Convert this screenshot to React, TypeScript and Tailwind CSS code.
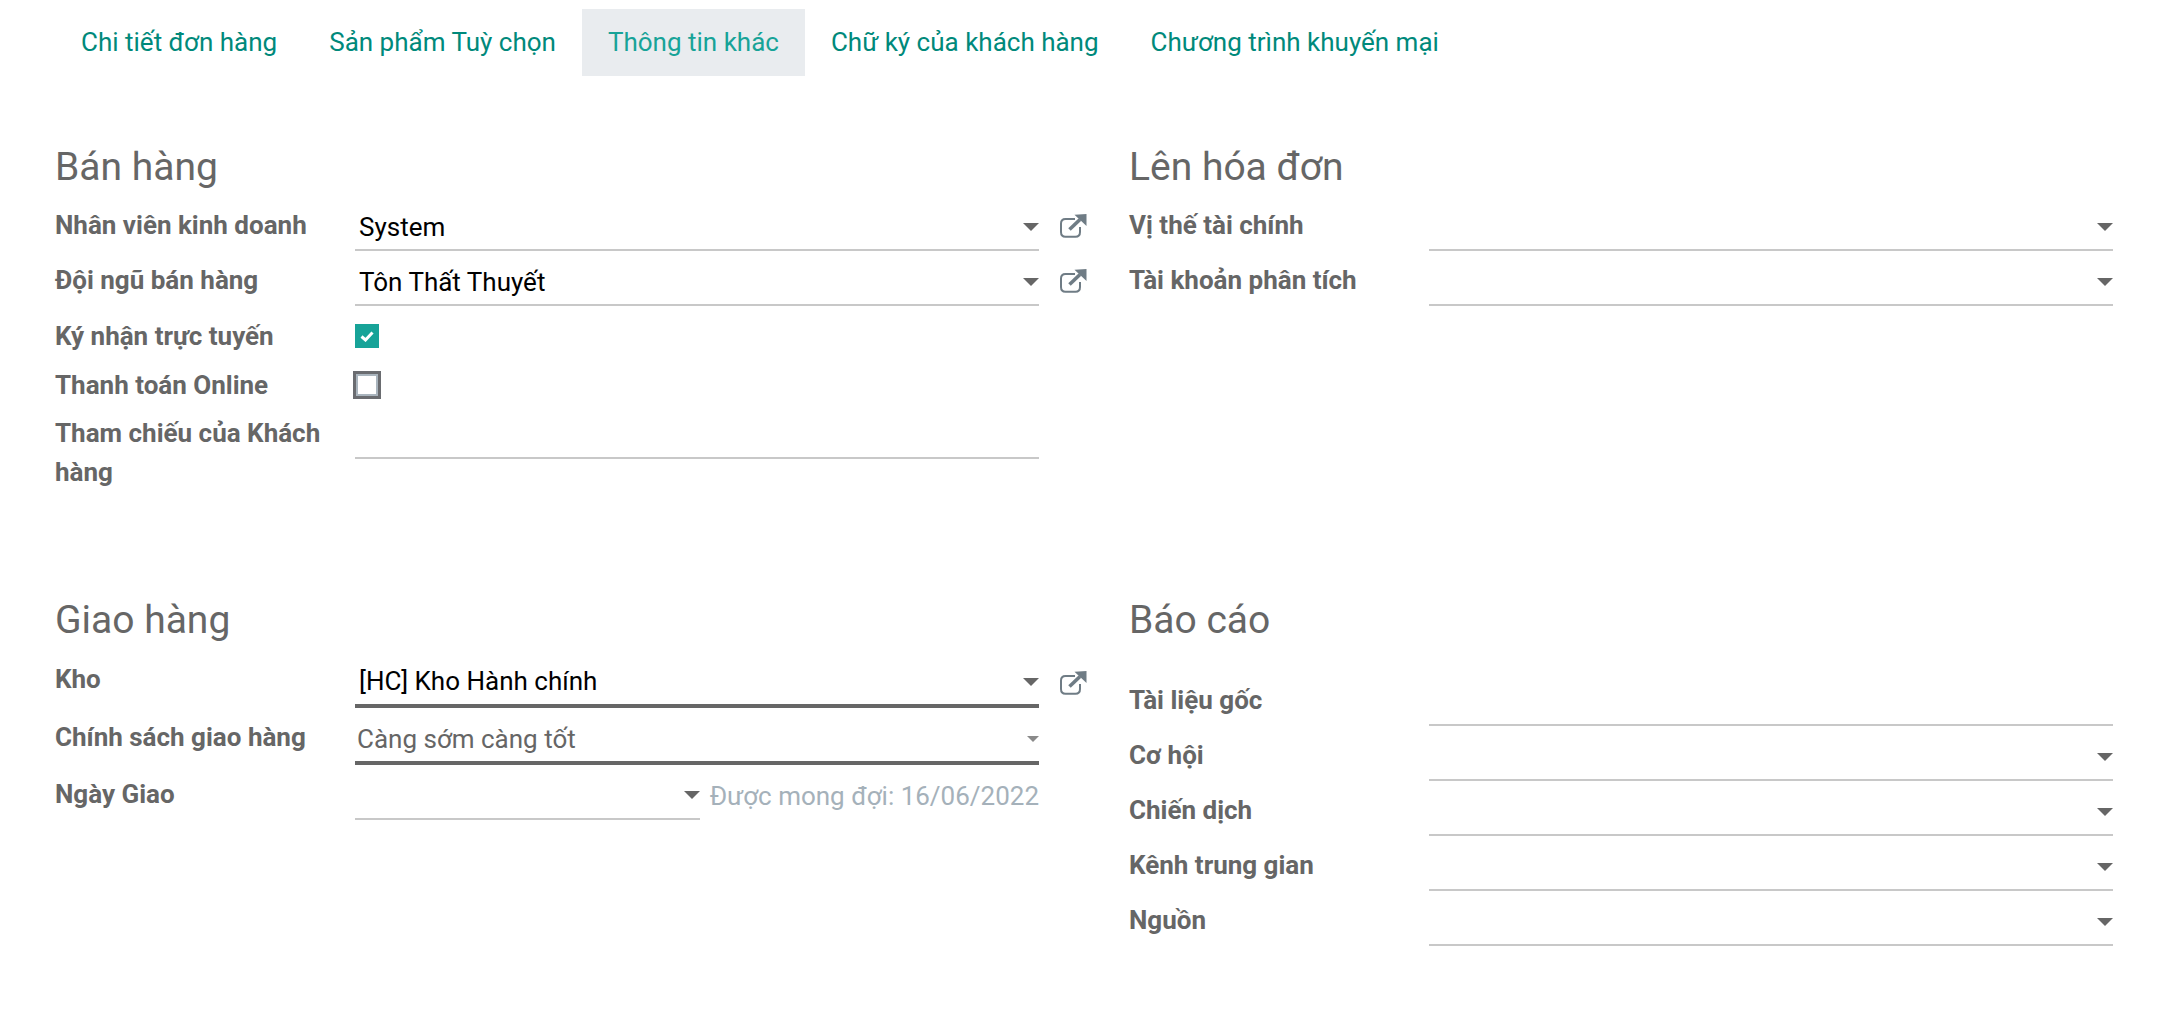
const FONT = "font-['Roboto',sans-serif]";

function Caret({ small }: { small?: boolean }) {
  return small ? (
    <span className="w-0 h-0 border-x-[6px] border-x-transparent border-t-[6px] border-t-[#8a8a8a]" />
  ) : (
    <span className="w-0 h-0 border-x-[8px] border-x-transparent border-t-[8px] border-t-[#666666]" />
  );
}

function LinkIcon() {
  return (
    <svg width="27" height="24" viewBox="0 0 27 24" fill="none" className="ml-[21px] shrink-0">
      <path d="M20 13V18C20 21 18.5 22.8 15.5 22.8H5.5C2.5 22.8 1 21 1 18V9.5C1 6.5 2.5 5 5.5 5H15" stroke="#6f7c85" strokeWidth="2" />
      <path d="M9.5 15.5L20 5.5" stroke="#6f7c85" strokeWidth="3.6" />
      <path d="M14.5 0.8L26.5 0V12L14.5 0.8Z" fill="#6f7c85" />
    </svg>
  );
}

function Field({ value, caret, link, thick, h = 55, muted, iconTop = 18, contentTop = 8 }: { value?: string; caret?: boolean; link?: boolean; thick?: boolean; h?: number; muted?: boolean; iconTop?: number; contentTop?: number }) {
  return (
    <div className="flex items-start">
      <div
        className={`w-[684px] flex items-center justify-between ${thick ? "border-b-4 border-[#666666]" : "border-b-2 border-[#c8c8c8]"}`}
        style={{ height: h, paddingTop: contentTop }}
      >
        <span className={muted ? "pl-[2px] text-[#666666]" : thick ? "pl-[4px] text-black" : "pl-[4px] pt-[2px] text-black"}>{value}</span>
        {caret && <Caret small={muted} />}
      </div>
      {link && <div style={{ paddingTop: iconTop }}><LinkIcon /></div>}
    </div>
  );
}

function Label({ children, className = "" }: { children: React.ReactNode; className?: string }) {
  return <div className={`w-[300px] shrink-0 font-bold text-[#666666] leading-[39px] ${className}`}>{children}</div>;
}

function Heading({ children }: { children: React.ReactNode }) {
  return <h2 className="text-[39px] leading-[46px] text-[#666666] font-normal">{children}</h2>;
}

function TextRow({ label, ...rest }: { label: string } & React.ComponentProps<typeof Field>) {
  return (
    <div className="flex">
      <Label className="pt-[10px]">{label}</Label>
      <Field {...rest} />
    </div>
  );
}

export default function App() {
  const tabs = ["Chi tiết đơn hàng", "Sản phẩm Tuỳ chọn", "Thông tin khác", "Chữ ký của khách hàng", "Chương trình khuyến mại"];
  const source = ["Cơ hội", "Chiến dịch", "Kênh trung gian", "Nguồn"];

  return (
    <div className={`${FONT} w-[2168px] h-[1012px] bg-white text-[26px] overflow-hidden`}>
      {/* TABS */}
      <div className="flex pt-[9px] pl-[55px] h-[76px]">
        {tabs.map((t) => (
          <div
            key={t}
            className={`px-[26px] h-[67px] flex items-center ${t === "Thông tin khác" ? "bg-[#e9ecef] text-[#17a398]" : "text-[#00897b]"}`}
          >
            {t}
          </div>
        ))}
      </div>

      <div className="pl-[55px] grid grid-cols-[1074px_984px]">
        {/* BAN HANG */}
        <div className="pt-[68px] h-[430px]">
          <Heading>Bán hàng</Heading>
          <div className="mt-[6px]">
            <TextRow label="Nhân viên kinh doanh" value="System" caret link />
            <TextRow label="Đội ngũ bán hàng" value="Tôn Thất Thuyết" caret link />
            <div className="flex h-[48px] mt-[6px] items-center">
              <Label>Ký nhận trực tuyến</Label>
              <div className="w-6 h-6 bg-[#17a398] flex items-center justify-center">
                <svg width="14" height="12" viewBox="0 0 14 12"><path d="M1.5 6.5L5.5 10L12.5 2.5" stroke="white" strokeWidth="3" fill="none" /></svg>
              </div>
            </div>
            <div className="flex h-[50px] items-center">
              <Label>Thanh toán Online</Label>
              <div className="w-[28px] h-[28px] -ml-[2px] border-[3px] border-[#6a6c70] bg-white shadow-[inset_0_0_0_2px_#a9b4bd]" />
            </div>
            <div className="flex">
              <Label className="pt-[4px]">Tham chiếu của Khách hàng</Label>
              <Field h={49} />
            </div>
          </div>
        </div>

        {/* LEN HOA DON */}
        <div className="pt-[68px]">
          <Heading>Lên hóa đơn</Heading>
          <div className="mt-[6px]">
            <TextRow label="Vị thế tài chính" caret />
            <TextRow label="Tài khoản phân tích" caret />
          </div>
        </div>

        {/* GIAO HANG */}
        <div className="pt-[91px]">
          <Heading>Giao hàng</Heading>
          <div className="mt-[7px]">
            <TextRow label="Kho" value="[HC] Kho Hành chính" caret link thick h={58} iconTop={21} contentTop={9} />
            <TextRow label="Chính sách giao hàng" value="Càng sớm càng tốt" caret thick muted h={57} contentTop={9} />
            <div className="flex">
              <Label className="pt-[10px]">Ngày Giao</Label>
              <div className="flex w-[684px] h-[55px]">
                <div className="w-[346px] pt-[6px] flex items-center justify-end border-b-2 border-[#c8c8c8]"><Caret /></div>
                <span className="ml-[10px] pt-[12px] text-[#a5b1ba] whitespace-nowrap">Được mong đợi: 16/06/2022</span>
              </div>
            </div>
          </div>
        </div>

        {/* BAO CAO */}
        <div className="pt-[91px]">
          <Heading>Báo cáo</Heading>
          <div className="mt-[28px]">
            <TextRow label="Tài liệu gốc" />
            {source.map((s) => (
              <TextRow key={s} label={s} caret />
            ))}
          </div>
        </div>
      </div>
    </div>
  );
}
